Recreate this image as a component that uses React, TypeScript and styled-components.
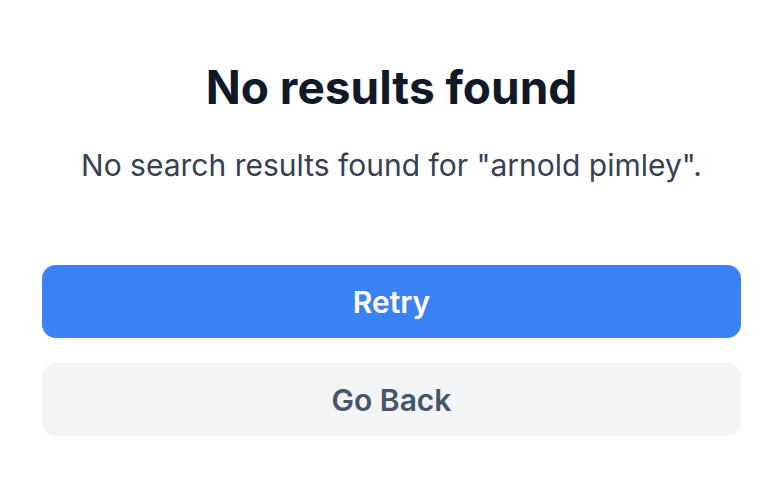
import React from "react";
import styled, { createGlobalStyle } from "styled-components";

const Global = createGlobalStyle`
  html, body { margin: 0; padding: 0; background: #ffffff; }
  body { font-family: Inter, "Noto Sans", sans-serif; }
`;

const Page = styled.div`
  width: 782px;
  height: 479px;
  box-sizing: border-box;
  padding: 59px 41px 0 42px;
  display: flex;
  flex-direction: column;
  align-items: stretch;
`;

const Title = styled.h1`
  margin: 0;
  text-align: center;
  font-size: 46px;
  line-height: 56px;
  font-weight: 700;
  color: #111827;
`;

const Message = styled.p`
  margin: 32px 0 0;
  text-align: center;
  font-size: 30px;
  line-height: 36px;
  font-weight: 400;
  color: #374151;
`;

const Actions = styled.div`
  margin-top: 82px;
  display: flex;
  flex-direction: column;
  gap: 25px;
`;

const Button = styled.button<{ $variant: "primary" | "secondary" }>`
  height: 73px;
  border: none;
  border-radius: 14px;
  font-family: Inter, "Noto Sans", sans-serif;
  font-size: 30px;
  font-weight: 600;
  cursor: pointer;
  background: ${(p) => (p.$variant === "primary" ? "#3b82f6" : "#f3f4f6")};
  color: ${(p) => (p.$variant === "primary" ? "#ffffff" : "#475569")};
`;

export default function App() {
  return (
    <>
      <Global />
      <Page>
        <Title>No results found</Title>
        <Message>No search results found for "arnold pimley".</Message>
        <Actions>
          <Button $variant="primary">Retry</Button>
          <Button $variant="secondary">Go Back</Button>
        </Actions>
      </Page>
    </>
  );
}
